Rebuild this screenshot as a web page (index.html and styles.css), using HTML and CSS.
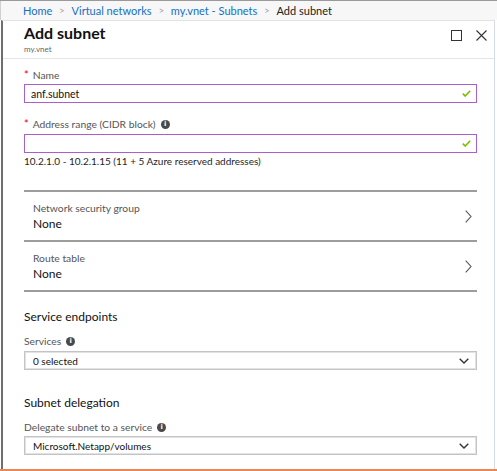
FILE: index.html
```html
<!DOCTYPE html>
<html>
<head>
<meta charset="utf-8">
<link rel="stylesheet" href="styles.css">
</head>
<body>
<div class="screen">
  <nav class="crumbs">
    <a class="crumb-link">Home</a><span class="sep">&gt;</span>
    <a class="crumb-link">Virtual networks</a><span class="sep">&gt;</span>
    <a class="crumb-link">my.vnet - Subnets</a><span class="sep">&gt;</span>
    <span class="crumb-current">Add subnet</span>
  </nav>
  <section class="panel">
    <header class="panel-head">
      <div class="titles">
        <h1 class="title">Add subnet</h1>
        <div class="subtitle">my.vnet</div>
      </div>
      <div class="head-actions">
        <svg class="act" width="11" height="11" viewBox="0 0 11 11"><rect x="0.5" y="0.5" width="10" height="10" fill="none" stroke="#333" stroke-width="1"/></svg>
        <svg class="act" width="11" height="11" viewBox="0 0 11 11"><path d="M0.5 0.5 L10.5 10.5 M10.5 0.5 L0.5 10.5" stroke="#333" stroke-width="1.1" fill="none"/></svg>
      </div>
    </header>
    <div class="panel-body">
      <label class="label label-first"><span class="req">*</span>Name</label>
      <div class="input valid"><span class="val">anf.subnet</span>
        <svg class="check" width="9" height="7" viewBox="0 0 9 7"><path d="M0.8 3.6 L3.2 6 L8.2 0.8" fill="none" stroke="#7fba00" stroke-width="1.6"/></svg>
      </div>
      <label class="label label-second"><span class="req">*</span>Address range (CIDR block)<span class="info">i</span></label>
      <div class="input valid input-second"><span class="val"></span>
        <svg class="check" width="9" height="7" viewBox="0 0 9 7"><path d="M0.8 3.6 L3.2 6 L8.2 0.8" fill="none" stroke="#7fba00" stroke-width="1.6"/></svg>
      </div>
      <div class="hint">10.2.1.0 - 10.2.1.15 (11 + 5 Azure reserved addresses)</div>

      <div class="nav-list">
        <div class="nav-row">
          <div class="nav-text">
            <div class="nav-label">Network security group</div>
            <div class="nav-value">None</div>
          </div>
          <svg class="chev" width="7" height="13" viewBox="0 0 7 13"><path d="M0.7 0.7 L6 6.5 L0.7 12.3" fill="none" stroke="#555" stroke-width="1.1"/></svg>
        </div>
        <div class="nav-row">
          <div class="nav-text">
            <div class="nav-label">Route table</div>
            <div class="nav-value">None</div>
          </div>
          <svg class="chev" width="7" height="13" viewBox="0 0 7 13"><path d="M0.7 0.7 L6 6.5 L0.7 12.3" fill="none" stroke="#555" stroke-width="1.1"/></svg>
        </div>
      </div>

      <h2 class="section section-first">Service endpoints</h2>
      <label class="label label-sec">Services<span class="info">i</span></label>
      <div class="select"><span class="val">0 selected</span>
        <svg class="down" width="10" height="6" viewBox="0 0 10 6"><path d="M0.7 0.7 L5 5 L9.3 0.7" fill="none" stroke="#333" stroke-width="1.4"/></svg>
      </div>

      <h2 class="section section-second">Subnet delegation</h2>
      <label class="label label-sec">Delegate subnet to a service<span class="info">i</span></label>
      <div class="select select-last"><span class="val">Microsoft.Netapp/volumes</span>
        <svg class="down" width="10" height="6" viewBox="0 0 10 6"><path d="M0.7 0.7 L5 5 L9.3 0.7" fill="none" stroke="#333" stroke-width="1.4"/></svg>
      </div>
    </div>
  </section>
  <div class="bottom-bar"></div>
</div>
</body>
</html>
```
FILE: styles.css
```css
* { box-sizing: border-box; }
html, body { margin: 0; padding: 0; background: #fff; }
body {
  width: 497px;
  height: 471px;
  overflow: hidden;
  font-family: Lato, "Open Sans", sans-serif;
  color: #1e1e1e;
}
.screen {
  width: 497px;
  height: 471px;
  display: flex;
  flex-direction: column;
  border-top: 1px solid #9a9a9a;
}
.crumbs {
  height: 19px;
  display: flex;
  align-items: center;
  padding-left: 22px;
  font-size: 11px;
  background: #f7f7f7;
  border-left: 1px solid #cfcfcf;
  white-space: nowrap;
}
.crumb-link { color: #1570c4; }
.crumb-current { color: #222; }
.sep { color: #999; font-size: 9px; margin: 0 7px; }
.panel {
  flex: 1;
  display: flex;
  flex-direction: column;
  margin-left: 1px;
  margin-right: 2px;
  border-left: 2px solid #6e6e6e;
  border-right: 1px solid #d6dbe3;
  border-top: 1px solid #e2e2e2;
  background: #fff;
}
.panel-head {
  height: 38px;
  display: flex;
  justify-content: space-between;
  align-items: flex-start;
  padding: 1px 7px 0 21px;
  border-bottom: 1px solid #e4e4e4;
}
.title {
  margin: 0;
  font-size: 16px;
  font-weight: 700;
  line-height: 22px;
  color: #111;
}
.subtitle {
  font-size: 8px;
  line-height: 10px;
  color: #666;
  margin-top: 0;
}
.head-actions {
  display: flex;
  gap: 14px;
  padding-top: 8px;
}
.panel-body {
  padding: 0 17px 0 21px;
  display: flex;
  flex-direction: column;
}
.label {
  display: flex;
  align-items: center;
  font-size: 10.3px;
  line-height: 14px;
  height: 14px;
  color: #555;
}
.label-first { margin-top: 9px; }
.label-second { margin-top: 14px; }
.req { color: #e00; margin-right: 4px; font-size: 11px; }
.info {
  display: inline-flex;
  align-items: center;
  justify-content: center;
  width: 9px;
  height: 9px;
  border-radius: 50%;
  background: #4a4a4a;
  color: #fff;
  font-size: 7px;
  font-weight: 700;
  line-height: 9px;
  margin-left: 5px;
  font-family: "DejaVu Sans", sans-serif;
}
.input {
  margin-top: 2px;
  height: 19px;
  border: 1px solid #a95fcc;
  display: flex;
  align-items: center;
  justify-content: space-between;
  padding: 0 5px 0 6px;
  font-size: 10.5px;
  color: #111;
}
.input-second { margin-top: 3px; }
.hint {
  margin-top: 1px;
  font-size: 10px;
  line-height: 14px;
  color: #1e1e1e;
}
.nav-list {
  margin-top: 22px;
  border-top: 2px solid #9c9c9c;
}
.nav-row {
  height: 50px;
  display: flex;
  align-items: center;
  justify-content: space-between;
  padding: 0 5px 0 9px;
  border-bottom: 2px solid #9c9c9c;
}
.nav-text { display: flex; flex-direction: column; }
.nav-label { font-size: 10.3px; line-height: 14px; color: #555; }
.nav-value { font-size: 12px; line-height: 17px; color: #111; }
.section {
  margin: 0;
  font-size: 12px;
  font-weight: 400;
  line-height: 18px;
  color: #111;
}
.section-first { margin-top: 16px; }
.section-second { margin-top: 24px; }
.label-sec { margin-top: 8px; }
.select {
  margin-top: 3px;
  height: 19px;
  border: 1px solid #c4c4c4;
  box-shadow: inset 0 0 0 1px #e2e2e2;
  display: flex;
  align-items: center;
  justify-content: space-between;
  padding: 0 7px 0 8px;
  font-size: 10px;
  color: #111;
}
.select-last { margin-top: 2px; }
.bottom-bar {
  height: 2px;
  background: #e8875a;
}
```
